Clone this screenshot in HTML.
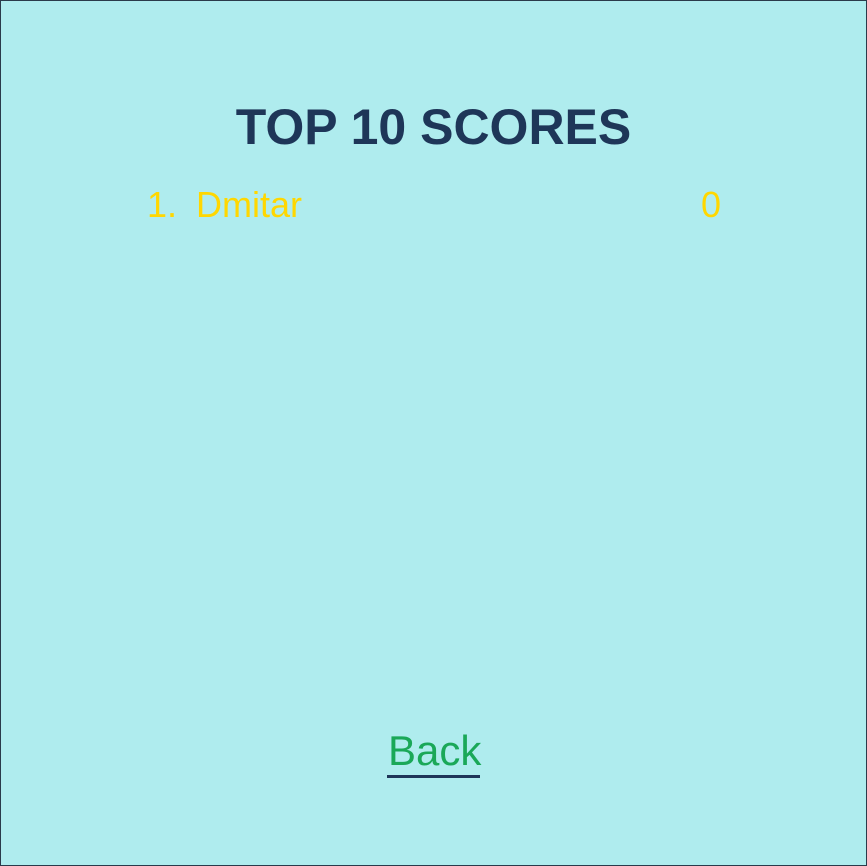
<!DOCTYPE html>
<html><head><style>
html,body{margin:0;padding:0;}
body{width:867px;height:866px;background:#afecee;position:relative;overflow:hidden;font-family:"Liberation Sans",Arial,sans-serif;}
.frame{position:absolute;left:0;top:0;width:865px;height:864px;border:1px solid #2a3a4a;}
h1{position:absolute;left:0;width:867px;top:98px;margin:0;text-align:center;font-size:50px;font-weight:bold;color:#1e3658;line-height:58px;}
.row{position:absolute;top:184px;font-size:36px;color:#ffd700;line-height:42px;}
.back{position:absolute;left:388px;top:727px;font-size:42px;color:#1aa858;line-height:48px;}
.ul{position:absolute;left:387px;top:775px;width:93px;height:3px;background:#1e3658;}
</style></head><body>
<div class="frame"></div>
<h1>TOP 10 SCORES</h1>
<div class="row" style="left:147px">1.</div>
<div class="row" style="left:196px">Dmitar</div>
<div class="row" style="left:701px">0</div>
<div class="back">Back</div>
<div class="ul"></div>
</body></html>
